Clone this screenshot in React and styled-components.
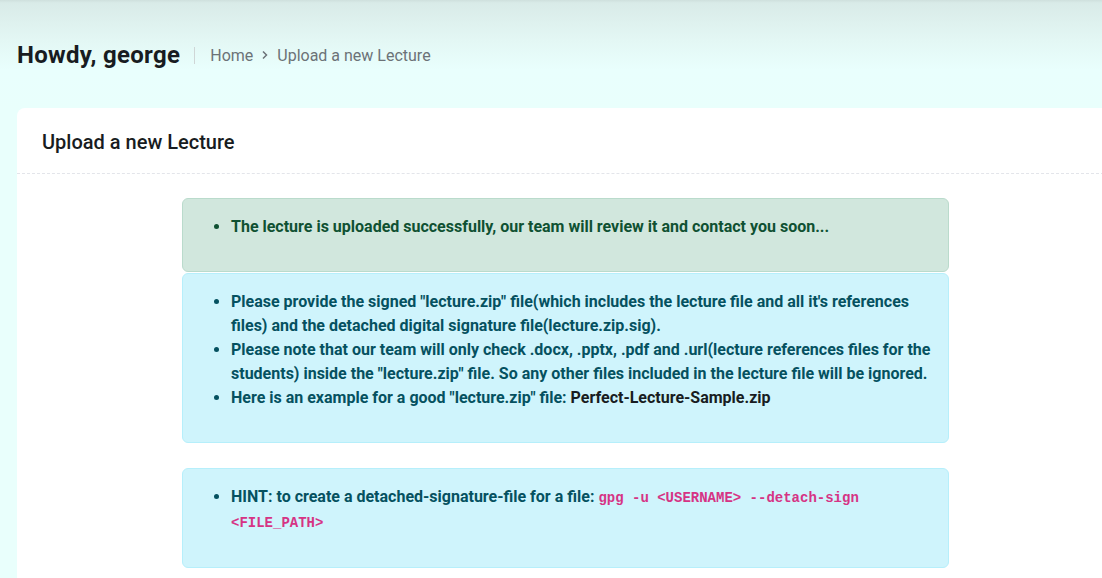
import React from "react";
import styled, { createGlobalStyle } from "styled-components";

const Global = createGlobalStyle`
  html, body { margin: 0; padding: 0; overflow: hidden; }
  body {
    font-family: Roboto, "Liberation Sans", sans-serif;
    background: #e9fffc;
    color: #212529;
  }
`;

const Page = styled.div`
  min-height: 578px;
  background: linear-gradient(to bottom, #cfe0dd 0px, #d9ebe8 3px, #e3f7f4 40px, #e9fffd 70px, #e9fffc 110px);
`;

const TopBar = styled.header`
  height: 108px;
  display: flex;
  align-items: center;
  padding: 2px 17px 0;
  box-sizing: border-box;
`;

const Greeting = styled.h1`
  margin: 0;
  font-size: 24px;
  font-weight: 700;
  color: #181c21;
  letter-spacing: 0.3px;
`;

const Divider = styled.span`
  width: 1px;
  height: 17px;
  background: #cfd6d6;
  margin: 0 15px 0 14px;
`;

const Crumbs = styled.nav`
  display: flex;
  align-items: center;
  font-size: 16px;
  color: #6c7277;
`;

const Chevron = styled.svg`
  margin: 0 7px 0 7px;
`;

const Card = styled.section`
  margin-left: 17px;
  width: 1097px;
  background: #fff;
  border-radius: 8px 8px 0 0;
  min-height: 470px;
`;

const CardHeader = styled.div`
  height: 66px;
  display: flex;
  align-items: center;
  padding: 2px 25px 0;
  box-sizing: border-box;
  border-bottom: 1px dashed #e3e5ea;
`;

const CardTitle = styled.h3`
  margin: 0;
  font-size: 20px;
  font-weight: 500;
  color: #181c21;
`;

const CardBody = styled.div`
  padding-top: 24px;
  display: flex;
  justify-content: center;
`;

const Column = styled.div`
  width: 767px;
`;

const Alert = styled.div`
  box-sizing: border-box;
  padding: 16px;
  border: 1px solid ${(p) => (p.$kind === "success" ? "#badbcc" : "#b6effb")};
  background: ${(p) => (p.$kind === "success" ? "#d1e7dd" : "#cff4fc")};
  color: ${(p) => (p.$kind === "success" ? "#0f5132" : "#055160")};
  border-radius: 6px;
  margin-bottom: ${(p) => p.$gap || 0}px;
  font-size: 16px;
  font-weight: 700;
  line-height: 24px;
`;

const List = styled.ul`
  margin: 0 0 16px;
  padding-left: 32px;
`;

const Item = styled.li``;

const Strong = styled.span`
  color: #181c21;
`;

const Code = styled.code`
  font-family: "Liberation Mono", "DejaVu Sans Mono", monospace;
  font-size: 14px;
  font-weight: 700;
  color: #d63384;
`;

export default function App() {
  return (
    <>
      <Global />
      <Page>
        <TopBar>
          <Greeting>Howdy, george</Greeting>
          <Divider />
          <Crumbs>
            <span>Home</span>
            <Chevron width="10" height="10" viewBox="0 0 10 10">
              <path d="M3 1.5 L6.5 5 L3 8.5" fill="none" stroke="#6c7277" strokeWidth="1.5" />
            </Chevron>
            <span>Upload a new Lecture</span>
          </Crumbs>
        </TopBar>
        <Card>
          <CardHeader>
            <CardTitle>Upload a new Lecture</CardTitle>
          </CardHeader>
          <CardBody>
            <Column>
              <Alert $kind="success" $gap={1}>
                <List>
                  <Item>The lecture is uploaded successfully, our team will review it and contact you soon...</Item>
                </List>
              </Alert>
              <Alert $kind="info" $gap={25}>
                <List>
                  <Item>
                    Please provide the signed "lecture.zip" file(which includes the lecture file and all it's references files) and the detached digital signature file(lecture.zip.sig).
                  </Item>
                  <Item>
                    Please note that our team will only check .docx, .pptx, .pdf and .url(lecture references files for the students) inside the "lecture.zip" file. So any other files included in the lecture file will be ignored.
                  </Item>
                  <Item>
                    Here is an example for a good "lecture.zip" file: <Strong>Perfect-Lecture-Sample.zip</Strong>
                  </Item>
                </List>
              </Alert>
              <Alert $kind="info">
                <List>
                  <Item>
                    HINT: to create a detached-signature-file for a file: <Code>gpg -u &lt;USERNAME&gt; --detach-sign &lt;FILE_PATH&gt;</Code>
                  </Item>
                </List>
              </Alert>
            </Column>
          </CardBody>
        </Card>
      </Page>
    </>
  );
}
